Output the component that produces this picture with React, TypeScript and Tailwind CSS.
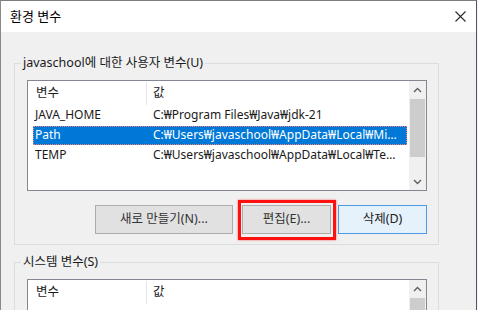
import React from 'react'

const font = { fontFamily: '"Noto Sans", "Noto Sans CJK KR", sans-serif' }

type Row = { name: string; value: string; selected?: boolean }

const userRows: Row[] = [
  { name: 'JAVA_HOME', value: 'C:₩Program Files₩Java₩jdk-21' },
  { name: 'Path', value: 'C:₩Users₩javaschool₩AppData₩Local₩Microsoft₩WindowsApps', selected: true },
  { name: 'TEMP', value: 'C:₩Users₩javaschool₩AppData₩Local₩Temp' },
]

function Chevron({ up }: { up?: boolean }) {
  return (
    <svg width="9" height="6" viewBox="0 0 9 6" className="text-[#606060]">
      <path
        d={up ? 'M1 5 L4.5 1.5 L8 5' : 'M1 1 L4.5 4.5 L8 1'}
        fill="none"
        stroke="currentColor"
        strokeWidth="1.4"
      />
    </svg>
  )
}

function Scrollbar({ thumbTop, thumbHeight }: { thumbTop: number; thumbHeight: number }) {
  return (
    <div className="flex w-[17px] shrink-0 flex-col bg-[#f0f0f0]">
      <div className="flex h-[17px] items-center justify-center">
        <Chevron up />
      </div>
      <div className="relative flex-1">
        <div
          className="absolute left-[1px] right-[1px] bg-[#cdcdcd]"
          style={{ top: thumbTop, height: thumbHeight }}
        />
      </div>
      <div className="flex h-[17px] items-center justify-center">
        <Chevron />
      </div>
    </div>
  )
}

function VarList({ rows, height }: { rows: Row[]; height: number }) {
  return (
    <div
      className="flex w-[400px] shrink-0 border border-[#828790] bg-white"
      style={{ height }}
    >
      <div className="flex min-w-0 flex-1 flex-col">
        <div className="flex h-[24px] shrink-0 items-center">
          <div className="flex h-[23px] w-[119px] items-center border-r border-[#e5e5e5] pl-[8px] text-[12.5px]">
            변수
          </div>
          <div className="pl-[6px] text-[12.5px]">값</div>
        </div>
        {rows.map((r) => (
          <div key={r.name} className="flex h-[20px] items-center pl-[5px] pr-[2px]">
            <div
              className={
                r.selected
                  ? 'flex h-[19px] w-full items-center border border-dotted border-[#f08080] bg-[#0078d7] text-white'
                  : 'flex h-[19px] w-full items-center border border-transparent'
              }
            >
              <div className="w-[113px] shrink-0 truncate pl-[1px]">{r.name}</div>
              <div className="min-w-0 flex-1 truncate pl-[6px] pr-[7px]">{r.value}</div>
            </div>
          </div>
        ))}
      </div>
      <Scrollbar thumbTop={1} thumbHeight={58} />
    </div>
  )
}

function GroupBox({ label, children }: { label: string; children: React.ReactNode }) {
  return (
    <div className="relative w-[425px] border border-[#dcdcdc] pl-[12px] pt-[16px]">
      <span className="absolute left-[6px] top-[-9px] bg-[#f0f0f0] px-[2px] text-[12.5px] leading-[16px]">
        {label}
      </span>
      {children}
    </div>
  )
}

export default function App() {
  return (
    <div className="h-[310px] w-[478px] overflow-hidden bg-[#f6f6f6]" style={font}>
      <div className="flex h-[310px] w-[477px] flex-col border-l border-r border-t border-l-[#8a8a8a] border-r-[#4b5566] border-t-[#7d7d7d] text-[12px] text-[#1a1a1a]">
        <div className="flex h-[31px] shrink-0 items-center justify-between bg-white pl-[9px] pr-[9px]">
          <span className="text-[13px] text-black">환경 변수</span>
          <svg width="11" height="11" viewBox="0 0 11 11" className="mr-[1px]">
            <path d="M0.5 0.5 L10.5 10.5 M10.5 0.5 L0.5 10.5" stroke="#2b2b2b" strokeWidth="1.1" />
          </svg>
        </div>
        <div className="flex flex-1 flex-col bg-[#f0f0f0] pl-[13px] pt-[31px]">
          <GroupBox label="javaschool에 대한 사용자 변수(U)">
            <VarList rows={userRows} height={111} />
            <div className="mt-[14px] mb-[10px] flex w-[400px] justify-end">
              <button className="h-[29px] w-[138px] border border-[#adadad] bg-[#e1e1e1] text-[12.5px] text-[#333]">
                새로 만들기(N)...
              </button>
              <div className="relative ml-[9px] mr-[7px]">
                <button className="h-[29px] w-[89px] border border-[#adadad] bg-[#e1e1e1] text-[12.5px] text-[#333]">
                  편집(E)...
                </button>
                <div className="pointer-events-none absolute -bottom-[6px] -left-[4px] -right-[5px] -top-[5px] border-[3px] border-[#ff1010] shadow-[0_0_2px_rgba(255,0,0,0.6)]" />
              </div>
              <button className="h-[29px] w-[89px] border border-[#4b9be6] bg-[#e5f1fb] text-[12.5px] text-[#222]">
                삭제(D)
              </button>
            </div>
          </GroupBox>
          <div className="mt-[17px]">
            <GroupBox label="시스템 변수(S)">
              <VarList rows={[]} height={120} />
            </GroupBox>
          </div>
        </div>
      </div>
    </div>
  )
}
